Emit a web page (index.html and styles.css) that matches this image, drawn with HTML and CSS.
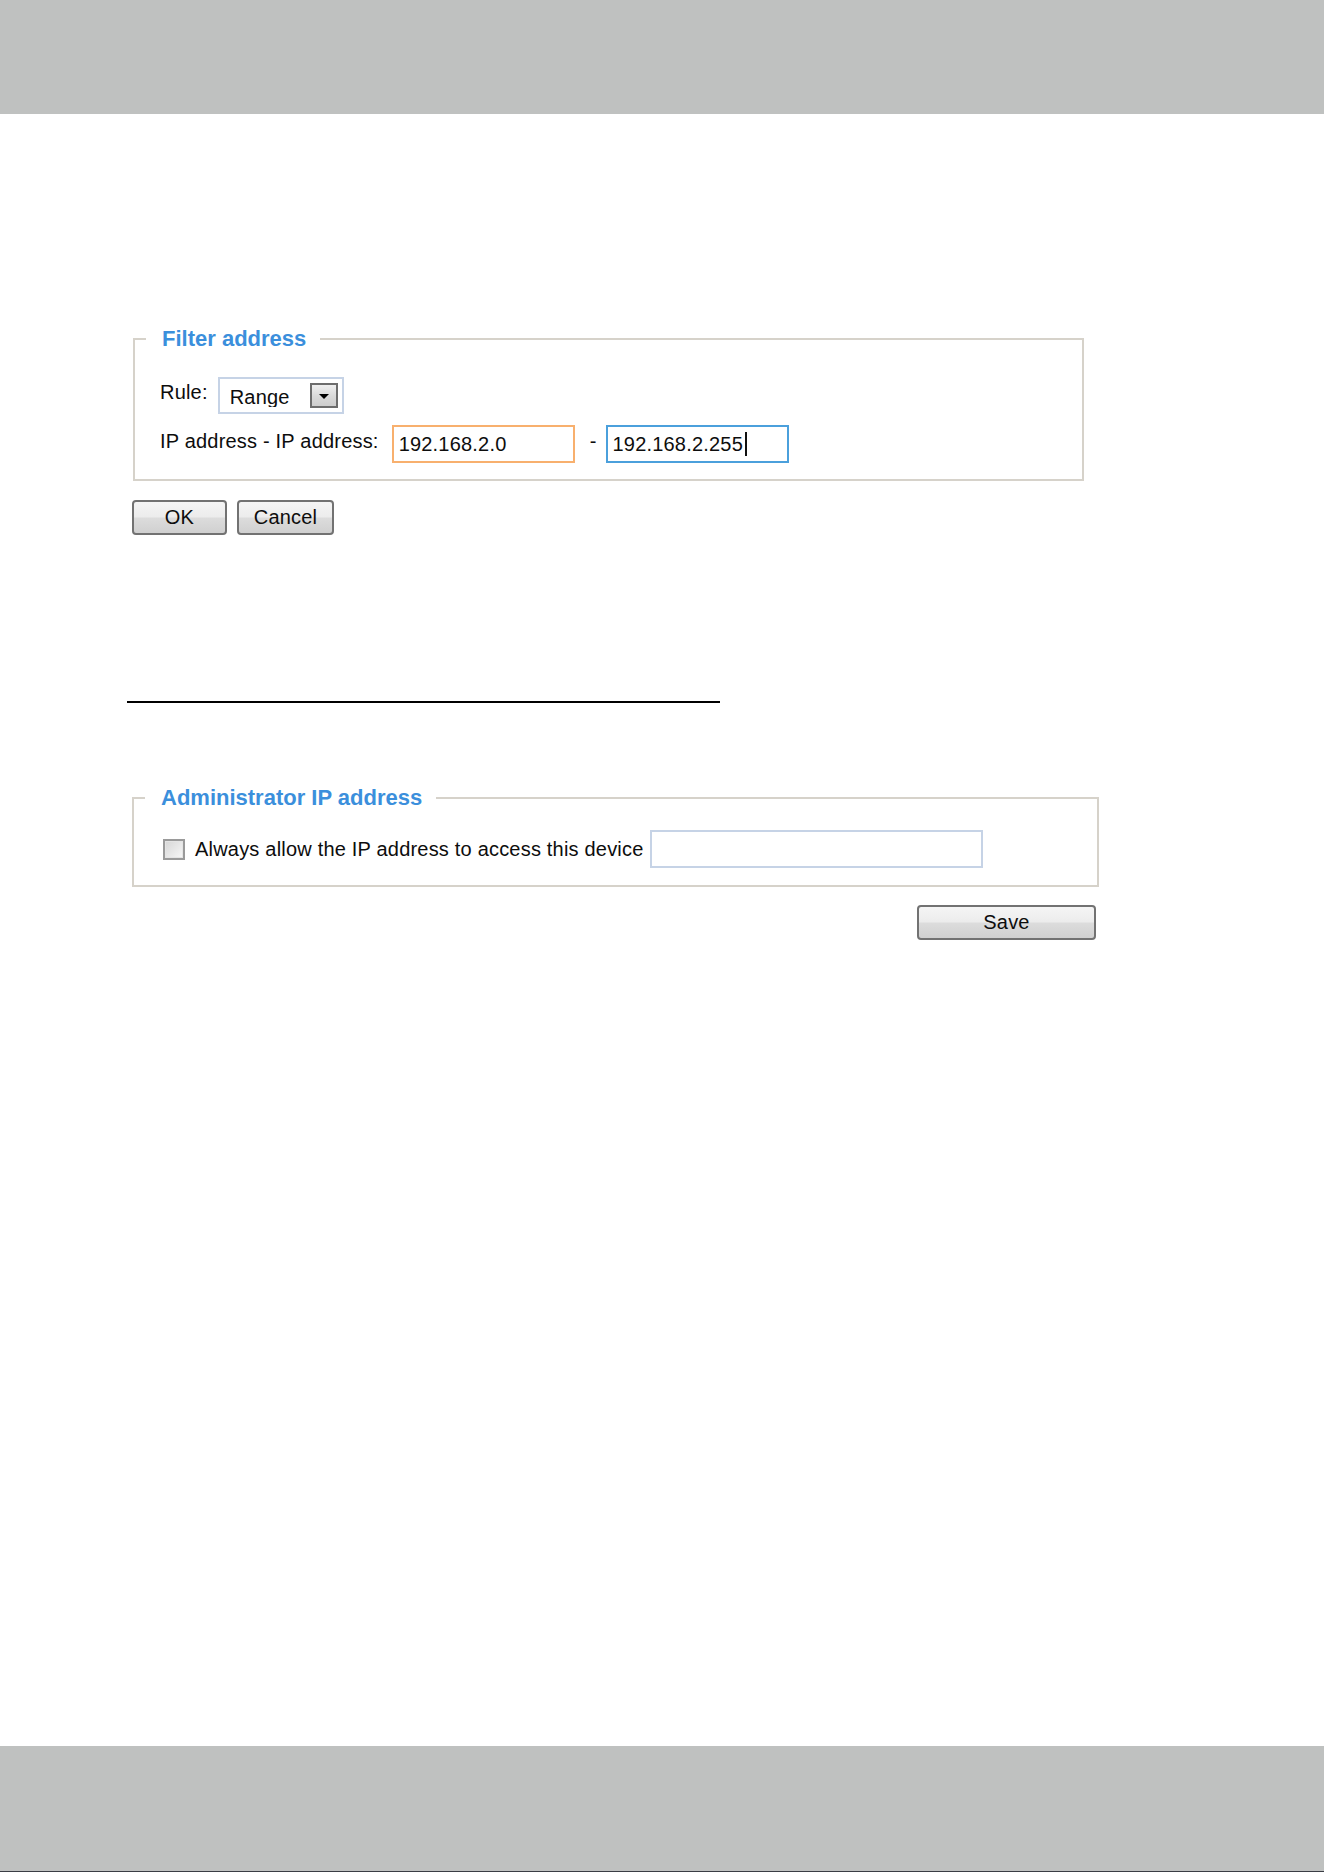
FILE: index.html
```html
<!DOCTYPE html>
<html lang="en">
<head>
<meta charset="utf-8">
<title>Access list</title>
<link rel="stylesheet" href="styles.css">
</head>
<body>
<header class="topbar"></header>

<main class="content">
  <form class="filter-form">
    <fieldset class="group group-filter">
      <legend class="group-title">Filter address</legend>
      <div class="group-body filter-body">
        <div class="row row-rule">
          <span class="label label-rule">Rule:</span>
          <div class="select">
            <span class="select-value">Range</span>
            <span class="select-arrow">
              <svg width="10" height="5" viewBox="0 0 10 5" aria-hidden="true"><path d="M0 0H10L5 5Z" fill="#000"/></svg>
            </span>
          </div>
        </div>
        <div class="row row-range">
          <span class="label label-range">IP address - IP address:</span>
          <div class="field field-hover"><span class="field-text">192.168.2.0</span></div>
          <span class="dash">-</span>
          <div class="field field-focus"><span class="field-text">192.168.2.255</span><span class="caret"></span></div>
        </div>
      </div>
    </fieldset>
    <div class="actions">
      <button type="button" class="btn btn-ok">OK</button>
      <button type="button" class="btn btn-cancel">Cancel</button>
    </div>
  </form>

  <div class="divider"></div>

  <form class="admin-form">
    <fieldset class="group group-admin">
      <legend class="group-title">Administrator IP address</legend>
      <div class="group-body admin-body">
        <div class="row row-check">
          <span class="checkbox"></span>
          <span class="check-label">Always allow the IP address to access this device</span>
          <div class="field field-plain"></div>
        </div>
      </div>
    </fieldset>
    <div class="actions actions-right">
      <button type="button" class="btn btn-save">Save</button>
    </div>
  </form>
</main>

<footer class="bottombar"></footer>
</body>
</html>
```

FILE: styles.css
```css
* {
  box-sizing: border-box;
}

html,
body {
  margin: 0;
}

body {
  min-height: 1872px;
  display: flex;
  flex-direction: column;
  background: #ffffff;
  font-family: "Liberation Sans", Arial, sans-serif;
  font-size: 20px;
  letter-spacing: 0.2px;
  color: #0d0d0d;
}

/* grey page bands */
.topbar {
  flex: none;
  height: 114px;
  background: #bfc1c0;
}

.bottombar {
  flex: none;
  height: 126px;
  background: #bfc1c0;
  border-bottom: 1px solid #3a3d44;
}

.content {
  flex: 1;
  padding: 212px 0 0 127px;
}

/* fieldset groups */
.group {
  margin: 0;
  padding: 0;
  min-width: 0;
  border: 2px solid #d6d2ca;
}

.group-title {
  margin-left: 11px;
  padding: 0 14px 0 16px;
  font-size: 22px;
  line-height: 26px;
  font-weight: bold;
  letter-spacing: 0;
  color: #3b8fdc;
}

.group-filter {
  width: 951px;
  margin-left: 6px;
}

.filter-body {
  padding: 25px 0 16px 25px;
}

.row {
  display: flex;
  align-items: flex-start;
}

.row-range {
  margin-top: 11px;
}

.label {
  line-height: 24px;
  white-space: nowrap;
}

.label-rule {
  margin: 3px 10px 0 0;
}

.label-range {
  margin: 4px 13px 0 0;
}

/* drop-down */
.select {
  display: flex;
  justify-content: space-between;
  align-items: flex-start;
  width: 126px;
  height: 37px;
  padding: 0 4px 0 10px;
  border: 2px solid #c6d3e6;
  background: #ffffff;
}

.select-value {
  display: block;
  margin-top: 6px;
  height: 22px;
  overflow: hidden;
  line-height: 24px;
}

.select-arrow {
  display: flex;
  align-items: center;
  justify-content: center;
  width: 28px;
  height: 25px;
  margin-top: 4px;
  border: 2px solid #6d6d6d;
  background: linear-gradient(#efefef, #d9d9d9 55%, #cdcdcd);
}

.select-arrow svg {
  margin-top: 2px;
}

/* text boxes */
.field {
  display: flex;
  align-items: center;
  width: 183px;
  height: 38px;
  padding: 0 5px;
  border: 2px solid #c6d3e6;
  background: #ffffff;
  line-height: 34px;
  white-space: nowrap;
}

.field-hover {
  border-color: #f8b06e;
}

.field-focus {
  border-color: #4ba0dc;
}

.caret {
  display: block;
  width: 2px;
  height: 24px;
  margin-left: 2px;
  background: #111111;
}

.dash {
  margin: 4px 9px 0 15px;
  line-height: 24px;
}

/* buttons */
.actions {
  display: flex;
  gap: 10px;
  margin: 19px 0 0 5px;
}

.btn {
  height: 35px;
  padding: 0;
  border: 2px solid #727272;
  border-radius: 4px;
  background: linear-gradient(#f5f5f5, #ececec 48%, #dcdcdc 52%, #d0d0d0);
  font: inherit;
  line-height: 31px;
  letter-spacing: 0.2px;
  color: #0d0d0d;
}

.btn-ok {
  width: 95px;
}

.btn-cancel {
  width: 97px;
}

.btn-save {
  width: 179px;
}

.actions-right {
  justify-content: flex-end;
  margin: 18px 0 0 0;
  padding-right: 3px;
}

/* separator */
.divider {
  width: 593px;
  height: 2px;
  margin-top: 166px;
  background: #000000;
}

/* administrator group */
.admin-form {
  width: 967px;
  margin: 82px 0 0 5px;
}

.admin-body {
  padding: 19px 0 17px 29px;
}

.row-check {
  align-items: center;
}

.checkbox {
  flex: none;
  width: 22px;
  height: 21px;
  margin-right: 10px;
  border: 2px solid #9a9a9a;
  box-shadow: inset 0 0 0 1px #e4e4e4;
  background: linear-gradient(135deg, #d6d6d6, #f7f7f7);
}

.check-label {
  line-height: 24px;
  white-space: nowrap;
  margin-right: 6px;
}

.field-plain {
  width: 333px;
}
```
